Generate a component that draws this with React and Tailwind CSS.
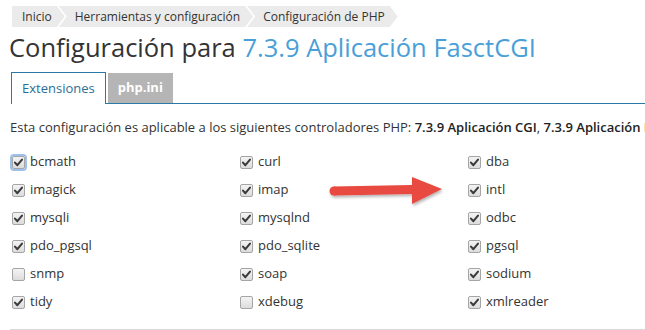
import React from 'react';

const font = { fontFamily: '"Open Sans", "Liberation Sans", sans-serif' };

const crumbs = ['Inicio', 'Herramientas y configuración', 'Configuración de PHP'];

const extensions = [
  ['bcmath', true], ['curl', true], ['dba', true],
  ['imagick', true], ['imap', true], ['intl', true],
  ['mysqli', true], ['mysqlnd', true], ['odbc', true],
  ['pdo_pgsql', true], ['pdo_sqlite', true], ['pgsql', true],
  ['snmp', false], ['soap', true], ['sodium', true],
  ['tidy', true], ['xdebug', false], ['xmlreader', true],
];

const Check = ({ checked, focus }) => (
  <span
    className={
      'flex items-center justify-center w-[13px] h-[13px] rounded-[2px] border border-[#a5a5a5] bg-gradient-to-b from-[#f4f4f4] to-[#dcdcdc] ' +
      (focus ? 'ring-2 ring-[#9fc0ea]' : '')
    }
  >
    {checked && (
      <svg width="9" height="9" viewBox="0 0 9 9">
        <path d="M1 4.6 L3.4 7.2 L8 1.6" fill="none" stroke="#3a3a3a" strokeWidth="2" strokeLinecap="round" strokeLinejoin="round" />
      </svg>
    )}
  </span>
);

export default function App() {
  return (
    <div className="relative w-[645px] h-[330px] overflow-hidden bg-white text-[#333]" style={font}>
      <div className="pl-[12px] pt-[6px] flex">
        {crumbs.map((c, i) => (
          <div
            key={c}
            className={
              'h-[21px] flex items-center bg-[#ebebeb] text-[12px] text-[#333] ' +
              (i === 0
                ? 'pl-[10px] pr-[13px] [clip-path:polygon(0_0,calc(100%-8px)_0,100%_50%,calc(100%-8px)_100%,0_100%)]'
                : 'pl-[16px] pr-[13px] -ml-[6px] [clip-path:polygon(0_0,calc(100%-8px)_0,100%_50%,calc(100%-8px)_100%,0_100%,8px_50%)]')
            }
          >
            {c}
          </div>
        ))}
      </div>

      <h1 className="pl-[9px] mt-[4px] text-[25.5px] leading-[32px] text-[#333]">
        Configuración para <span className="text-[#4a9fd8]">7.3.9 Aplicación FasctCGI</span>
      </h1>

      <div className="ml-[11px] mt-[9px] flex items-end gap-[2px] border-b border-[#2a7aa5] h-[32px]">
        <div className="h-[32px] -mb-px px-[10px] flex items-center border border-b-0 border-[#2a7aa5] bg-white text-[13px] text-[#2a6f96]">
          Extensiones
        </div>
        <div className="h-[30px] px-[10px] flex items-center bg-[#b5b5b5] text-[13px] font-bold text-white">
          php.ini
        </div>
      </div>

      <p className="pl-[10px] mt-[14px] text-[13px] leading-[18px] whitespace-nowrap text-[#333]">
        Esta configuración es aplicable a los siguientes controladores PHP:{' '}
        <span className="font-semibold text-[#222]">7.3.9 Aplicación CGI</span>,{' '}
        <span className="font-semibold text-[#222]">7.3.9 Aplicación FastCGI</span>
      </p>

      <div className="ml-[12px] mt-[16px] grid grid-cols-[228px_228px_228px] gap-y-[8px] w-[684px]">
        {extensions.map(([name, on], i) => (
          <label key={name} className="flex items-center gap-[5px] h-[20px] text-[13px] text-[#333]">
            <Check checked={on} focus={i === 0} />
            {name}
          </label>
        ))}
      </div>

      <div className="ml-[10px] mt-[17px] h-px bg-[#d9d9d9]" />

      {/* red arrow annotation */}
      <svg className="absolute left-[326px] top-[174px]" width="120" height="36" viewBox="0 0 120 36">
        <defs>
          <filter id="sh" x="-10%" y="-20%" width="120%" height="160%">
            <feDropShadow dx="1" dy="2" stdDeviation="1.5" floodColor="#000" floodOpacity="0.3" />
          </filter>
        </defs>
        <g filter="url(#sh)">
          <path d="M8 12.5 L86 11 L86 3 L116 15 L86 30 L86 20 L8 21.5 Z" fill="#e8483f" strokeLinejoin="round" />
          <circle cx="8" cy="17" r="4.5" fill="#e8483f" />
        </g>
      </svg>
    </div>
  );
}
